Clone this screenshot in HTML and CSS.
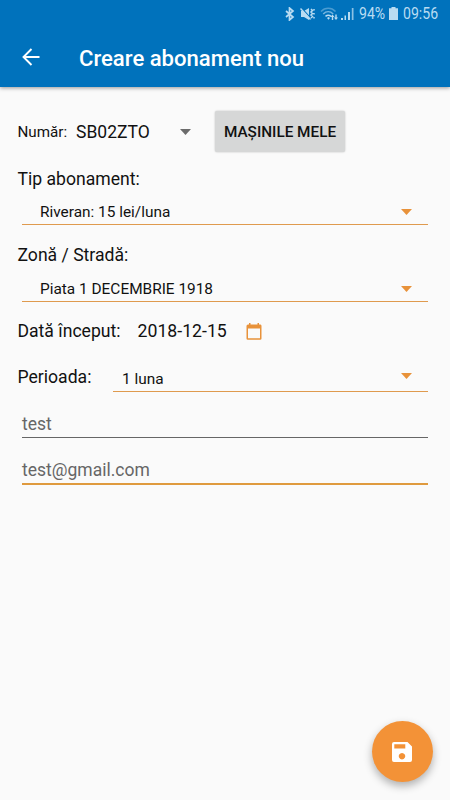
FILE: index.html
```html
<!DOCTYPE html>
<html lang="ro">
<head>
  <meta charset="UTF-8">
  <meta name="viewport" content="width=device-width, initial-scale=1.0">
  <title>Creare abonament nou</title>
  <link rel="stylesheet" href="styles.css">
</head>
<body>
  <header class="header">
    <div class="status-bar">
      <svg class="icon-bluetooth" width="10" height="14" viewBox="0 0 10 14"><path d="M1 4l7 6-3.500 3V1L8 4l-7 6" fill="none" stroke="currentColor" stroke-width="1.700"/></svg>
      <svg class="icon-mute" width="15" height="14" viewBox="0 0 15 14"><path d="M1 4h3L9 1v12L4 10H1z" fill="currentColor"/><path d="M1 .5l10 11" stroke="#0072bc" stroke-width="1.200"/><path d="M.5 1.500l10 11" stroke="currentColor" stroke-width="1.500"/><path d="M11 2l1.500 1.500L11 5l1.500 1.500L11 8l1.500 1.500L11 11M14 2v1.500M14 6v1.500M14 10v1.500" fill="none" stroke="currentColor" stroke-width="1.500"/></svg>
      <svg class="icon-wifi" width="19" height="14" viewBox="0 0 19 14"><g fill="none" stroke="currentColor" stroke-width="1.500"><path d="M1 4.500c4-4.200 10.500-4.200 14.500 0" opacity=".4"/><path d="M3.200 7c3-2.900 7-2.900 10 0" opacity=".65"/><path d="M5.500 9.300c1.800-1.500 3.700-1.500 5.500 0"/></g><path d="M7 11l1.500-1L10 11l-1.500 1.800zM10.500 10l2-2.500 2 2.500h-1.300v3h-1.400v-3zM14 10.500h1.300v-3h1.400v3H18l-2 2.500z" fill="currentColor"/></svg>
      <svg class="icon-signal" width="13" height="13" viewBox="0 0 13 13"><path d="M0 11h2v2H0zM3.500 8.500H5V13H3.500zM7 5h2v8H7z" fill="currentColor"/><path d="M10.800 1h1.700v12h-1.700z" fill="currentColor" opacity=".75"/></svg>
      <span class="battery-level">94%</span>
      <svg class="icon-battery" width="9" height="13" viewBox="0 0 9 13"><path d="M2.500 0h4v1.300H9V13H0V1.300h2.500z" fill="currentColor"/></svg>
      <span class="clock">09:56</span>
    </div>
    <div class="toolbar">
      <svg class="back" width="18" height="18" viewBox="0 0 18 18"><path d="M17.500 9H1.500M9.500 1L1.500 9l8 8" fill="none" stroke="currentColor" stroke-width="1.900"/></svg>
      <h1 class="title">Creare abonament nou</h1>
    </div>
  </header>

  <main class="form">
    <div class="row row-number">
      <span class="label-small">Număr:</span>
      <span class="plate">SB02ZTO</span>
      <svg class="arrow arrow-gray" width="11" height="6" viewBox="0 0 11 6"><path d="M0 0h11L5.500 6z" fill="currentColor"/></svg>
      <button class="button" type="button">MAȘINILE MELE</button>
    </div>

    <div class="label label-type">Tip abonament:</div>
    <div class="spinner">
      <span class="option">Riveran: 15 lei/luna</span>
      <svg class="arrow" width="11" height="6" viewBox="0 0 11 6"><path d="M0 0h11L5.500 6z" fill="currentColor"/></svg>
    </div>

    <div class="label label-zone">Zonă / Stradă:</div>
    <div class="spinner spinner-zone">
      <span class="option">Piata 1 DECEMBRIE 1918</span>
      <svg class="arrow" width="11" height="6" viewBox="0 0 11 6"><path d="M0 0h11L5.500 6z" fill="currentColor"/></svg>
    </div>

    <div class="row row-date">
      <span class="label label-date">Dată început:</span>
      <span class="date">2018-12-15</span>
      <svg class="calendar" width="16" height="17" viewBox="0 0 16 17"><path d="M3 0h1.500v1.500h7V0H13v1.500h1.500Q15.500 1.500 15.500 3v12.500q0 1.300-1.300 1.300H1.800q-1.300 0-1.300-1.300V3Q.5 1.500 2 1.500h1zM2 5.500v9.800h12V5.500z" fill="currentColor" fill-rule="evenodd"/></svg>
    </div>

    <div class="row row-period">
      <span class="label label-period">Perioada:</span>
      <div class="spinner spinner-period">
        <span class="option">1 luna</span>
        <svg class="arrow" width="11" height="6" viewBox="0 0 11 6"><path d="M0 0h11L5.500 6z" fill="currentColor"/></svg>
      </div>
    </div>

    <div class="field">test</div>
    <div class="field field-active">test@gmail.com</div>
  </main>

  <button class="fab" type="button" aria-label="Salvare">
    <svg width="20" height="20" viewBox="0 0 20 20"><path d="M2 0h13.500L20 4.500V18q0 2-2 2H2q-2 0-2-2V2Q0 0 2 0zM2.300 2.300v4.200h11V2.300zM10 11a3.200 3.200 0 1 0 .01 0z" fill="currentColor" fill-rule="evenodd"/></svg>
  </button>
</body>
</html>
```

FILE: styles.css
```css
* {
  box-sizing: border-box;
}
body {
  margin: 0;
  min-height: 800px;
  background: #fafafa;
  color: #111;
  font-family: Roboto, "Noto Sans", sans-serif;
}
svg {
  display: block;
  flex: none;
}
.header {
  height: 87px;
  background: #0072bc;
  color: #fff;
  box-shadow: 0 1px 4px rgba(0, 0, 0, 0.4);
}
.status-bar {
  display: flex;
  align-items: center;
  justify-content: flex-end;
  height: 27px;
  padding-right: 12px;
  color: #b9dcf2;
  font-size: 16px;
}
.icon-mute {
  margin-left: 5px;
}
.icon-wifi {
  margin-left: 5px;
}
.icon-signal {
  margin-left: 2px;
}
.battery-level,
.clock {
  margin-left: 5px;
  transform: scaleX(0.88);
  transform-origin: left;
}
.battery-level {
  width: 26px;
}
.icon-battery {
  margin-left: 4px;
}
.clock {
  width: 35px;
}
.toolbar {
  display: flex;
  align-items: center;
  height: 60px;
  padding-left: 22px;
}
.title {
  margin: 2px 0 0 39px;
  font-size: 22.100px;
  font-weight: 500;
}
.form {
  padding: 22px 22px 0 17.500px;
}
.row {
  display: flex;
  align-items: center;
}
.row-number {
  height: 45px;
}
.label-small {
  width: 58.500px;
  font-size: 15.200px;
}
.plate {
  width: 104px;
  font-size: 17.500px;
}
.arrow {
  color: #e8923a;
}
.arrow-gray {
  color: #6b6b6b;
}
.button {
  width: 130px;
  height: 41px;
  margin-left: 24px;
  padding: 0;
  border: 0;
  border-radius: 2px;
  background: #d6d7d7;
  box-shadow: 0 0 2px rgba(0, 0, 0, 0.25);
  color: #111;
  font-family: inherit;
  font-size: 15.300px;
  font-weight: 500;
}
.label {
  font-size: 17.600px;
  line-height: 24px;
}
.label-type {
  margin-top: 13px;
}
.label-zone {
  margin-top: 18px;
}
.spinner {
  display: flex;
  align-items: center;
  justify-content: space-between;
  height: 34px;
  margin-left: 4.500px;
  padding: 8px 16px 0 18px;
  border-bottom: 1px solid #df9a4e;
}
.spinner-zone {
  height: 35px;
  padding-top: 9px;
}
.option {
  font-size: 15.400px;
}
.row-date {
  height: 24px;
  margin-top: 17px;
}
.label-date {
  width: 120px;
}
.date {
  width: 90px;
  font-size: 17.700px;
}
.calendar {
  margin-left: 18px;
  color: #e8923a;
}
.row-period {
  margin-top: 15px;
}
.label-period {
  width: 95.500px;
  padding-top: 4px;
}
.spinner-period {
  flex: 1;
  margin-left: 0;
  padding-left: 9px;
}
.spinner-period .arrow {
  margin-bottom: 6px;
}
.field {
  height: 46px;
  margin-left: 4.500px;
  padding-top: 22px;
  border-bottom: 1px solid #666;
  color: #666;
  font-size: 17.500px;
  line-height: 20px;
}
.field-active {
  height: 47px;
  border-bottom: 2px solid #df9a3e;
}
.fab {
  position: fixed;
  right: 17.500px;
  bottom: 18px;
  display: flex;
  align-items: center;
  justify-content: center;
  width: 61px;
  height: 61px;
  padding: 0;
  border: 0;
  border-radius: 50%;
  background: #f39237;
  box-shadow: 0 4px 8px rgba(0, 0, 0, 0.3);
  color: #fff;
}
```
